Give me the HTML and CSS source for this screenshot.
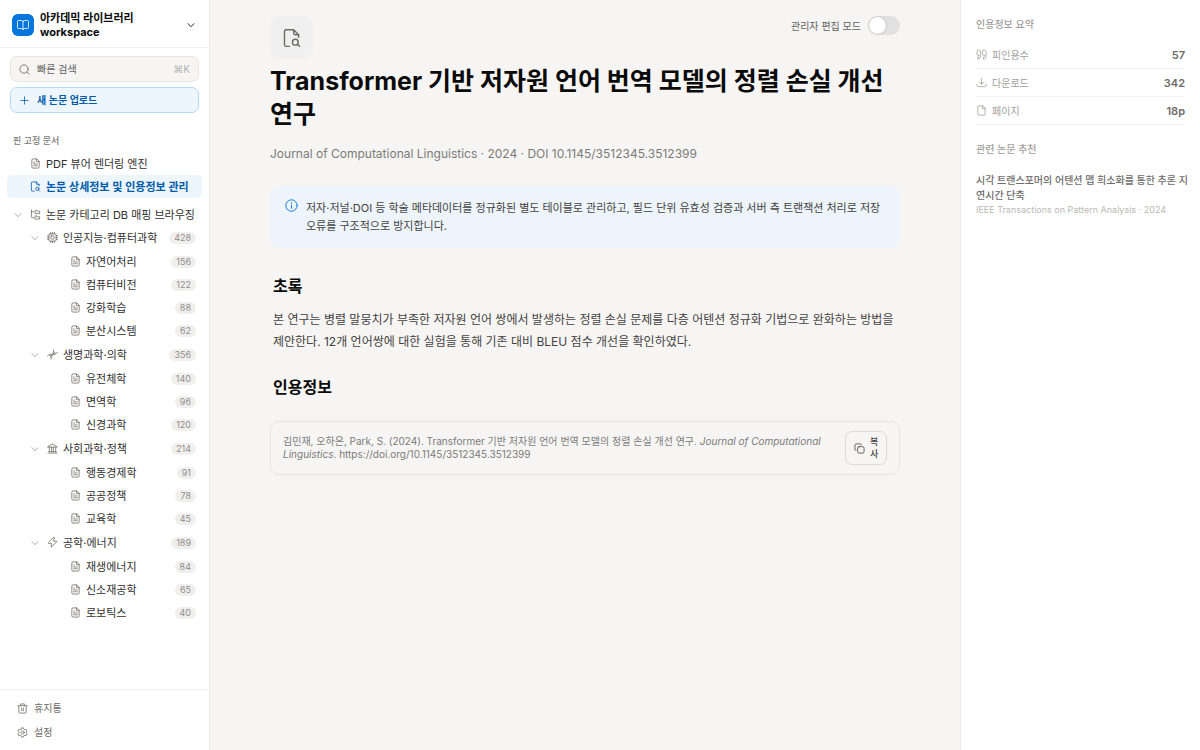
FILE: index.html
```html
<!DOCTYPE html>
<html lang="ko">
<head>
  <meta charset="UTF-8">
  <meta name="viewport" content="width=device-width, initial-scale=1.0">
  <title>아카데믹 라이브러리</title>
  <link rel="stylesheet" href="styles.css">
</head>
<body>
  <svg class="sprite" aria-hidden="true">
    <symbol id="i-book" viewBox="0 0 24 24"><path d="M12 5v16M12 5a3 3 0 0 0-3-2H3a2 2 0 0 0-2 2v12a2 2 0 0 0 2 2h6a3 3 0 0 1 3 2M12 5a3 3 0 0 1 3-2h6a2 2 0 0 1 2 2v12a2 2 0 0 1-2 2h-6a3 3 0 0 0-3 2"/></symbol>
    <symbol id="i-down" viewBox="0 0 24 24"><path d="M3 8l9 9 9-9"/></symbol>
    <symbol id="i-search" viewBox="0 0 24 24"><circle cx="11" cy="11" r="9"/><path d="M17.500 17.500L22 22"/></symbol>
    <symbol id="i-plus" viewBox="0 0 24 24"><path d="M12 4v16M4 12h16"/></symbol>
    <symbol id="i-doc" viewBox="0 0 24 24"><path d="M14 2H6.500A2.500 2.500 0 0 0 4 4.500v15A2.500 2.500 0 0 0 6.500 22h11a2.500 2.500 0 0 0 2.500-2.500V8zM14 2v6h6M8 9h2M8 13h8M8 17h8"/></symbol>
    <symbol id="i-docsearch" viewBox="0 0 24 24"><path d="M9 22H5a2 2 0 0 1-2-2V4a2 2 0 0 1 2-2h9l6 6v3M14 2v4a2 2 0 0 0 2 2h4"/><circle cx="16" cy="17" r="3.500"/><path d="M18.500 19.500L21 22"/></symbol>
    <symbol id="i-tree" viewBox="0 0 24 24"><path d="M3 2v15a2 2 0 0 0 2 2h4M3 6h5M12 3h3l1 2h5v5h-9zM12 15h3l1 2h5v5h-9z"/></symbol>
    <symbol id="i-cpu" viewBox="0 0 24 24"><rect x="4" y="4" width="16" height="16" rx="3"/><rect x="8.500" y="8.500" width="7" height="7" rx="1"/><path d="M8 1v3M12 1v3M16 1v3M8 20v3M12 20v3M16 20v3M1 8h3M1 12h3M1 16h3M20 8h3M20 12h3M20 16h3"/></symbol>
    <symbol id="i-dna" viewBox="0 0 24 24"><path d="M1 15c3-4 7-2 11-3s8 0 11-5M9 22c-2-4 1-7 3-10s4-5 2-10M5 13l5 5M14 6l5 4M9 11l2 4M13 9l2 3"/></symbol>
    <symbol id="i-bank" viewBox="0 0 24 24"><path d="M2 8l10-6 10 6v1H2zM5 9v10M10 9v10M14 9v10M19 9v10M2 22h20M4 19h16"/></symbol>
    <symbol id="i-bolt" viewBox="0 0 24 24"><path d="M13 2L3 12a1 1 0 0 0 1 2h6l-1 8 12-11a1 1 0 0 0-1-2h-6l2-7z"/></symbol>
    <symbol id="i-trash" viewBox="0 0 24 24"><path d="M2 6h20M8 6V2h8v4M4 6v14a2 2 0 0 0 2 2h12a2 2 0 0 0 2-2V6M10 11v6M14 11v6"/></symbol>
    <symbol id="i-gear" viewBox="0 0 24 24"><path d="M10 2h4l1 3 2 1 3-1 2 4-2 2v2l2 2-2 4-3-1-2 1-1 3h-4l-1-3-2-1-3 1-2-4 2-2v-2L2 9l2-4 3 1 2-1z"/><circle cx="12" cy="12" r="3.500"/></symbol>
    <symbol id="i-info" viewBox="0 0 24 24"><circle cx="12" cy="12" r="10.500"/><path d="M12 11v6M12 7v1"/></symbol>
    <symbol id="i-copy" viewBox="0 0 24 24"><rect x="8" y="8" width="14" height="14" rx="3"/><path d="M4 16a2 2 0 0 1-2-2V5a3 3 0 0 1 3-3h9a2 2 0 0 1 2 2"/></symbol>
    <symbol id="i-quote" viewBox="0 0 24 24"><path d="M6 14a3.500 3.500 0 0 1-4-3.500V6a4 4 0 0 1 8 0v9c0 4-2 7-6 7v-4c2 0 2-2 2-4zM18 14a3.500 3.500 0 0 1-4-3.500V6a4 4 0 0 1 8 0v9c0 4-2 7-6 7v-4c2 0 2-2 2-4z"/></symbol>
    <symbol id="i-download" viewBox="0 0 24 24"><path d="M12 3v13M7 11l5 5 5-5M2 16v2a3 3 0 0 0 3 3h14a3 3 0 0 0 3-3v-2"/></symbol>
    <symbol id="i-page" viewBox="0 0 24 24"><path d="M14 2H6a2 2 0 0 0-2 2v16a2 2 0 0 0 2 2h12a2 2 0 0 0 2-2V8zM14 2v6h6"/></symbol>
  </svg>

  <div class="app">
    <aside class="sidebar">
      <button class="workspace">
        <span class="logo"><svg class="icon"><use href="#i-book"/></svg></span>
        <span class="workspace-name">아카데믹 라이브러리 workspace</span>
        <svg class="icon arrow"><use href="#i-down"/></svg>
      </button>

      <div class="actions">
        <button class="action search"><svg class="icon"><use href="#i-search"/></svg><span>빠른 검색</span><kbd>⌘K</kbd></button>
        <button class="action upload"><svg class="icon"><use href="#i-plus"/></svg><span>새 논문 업로드</span></button>
      </div>

      <nav class="tree">
        <h2 class="tree-label">핀 고정 문서</h2>
        <a class="row pin" href="#"><svg class="icon"><use href="#i-doc"/></svg><span>PDF 뷰어 렌더링 엔진</span></a>
        <a class="row pin active" href="#"><svg class="icon"><use href="#i-docsearch"/></svg><span>논문 상세정보 및 인용정보 관리</span></a>

        <button class="row root"><svg class="icon chevron"><use href="#i-down"/></svg><svg class="icon"><use href="#i-tree"/></svg><span>논문 카테고리 DB 매핑 브라우징</span></button>
        <div class="group">
          <button class="row branch"><svg class="icon chevron"><use href="#i-down"/></svg><svg class="icon"><use href="#i-cpu"/></svg><span>인공지능·컴퓨터과학</span><b class="count">428</b></button>
          <a class="row leaf" href="#"><svg class="icon"><use href="#i-doc"/></svg><span>자연어처리</span><b class="count">156</b></a>
          <a class="row leaf" href="#"><svg class="icon"><use href="#i-doc"/></svg><span>컴퓨터비전</span><b class="count">122</b></a>
          <a class="row leaf" href="#"><svg class="icon"><use href="#i-doc"/></svg><span>강화학습</span><b class="count">88</b></a>
          <a class="row leaf" href="#"><svg class="icon"><use href="#i-doc"/></svg><span>분산시스템</span><b class="count">62</b></a>
        </div>
        <div class="group">
          <button class="row branch"><svg class="icon chevron"><use href="#i-down"/></svg><svg class="icon"><use href="#i-dna"/></svg><span>생명과학·의학</span><b class="count">356</b></button>
          <a class="row leaf" href="#"><svg class="icon"><use href="#i-doc"/></svg><span>유전체학</span><b class="count">140</b></a>
          <a class="row leaf" href="#"><svg class="icon"><use href="#i-doc"/></svg><span>면역학</span><b class="count">96</b></a>
          <a class="row leaf" href="#"><svg class="icon"><use href="#i-doc"/></svg><span>신경과학</span><b class="count">120</b></a>
        </div>
        <div class="group">
          <button class="row branch"><svg class="icon chevron"><use href="#i-down"/></svg><svg class="icon"><use href="#i-bank"/></svg><span>사회과학·정책</span><b class="count">214</b></button>
          <a class="row leaf" href="#"><svg class="icon"><use href="#i-doc"/></svg><span>행동경제학</span><b class="count">91</b></a>
          <a class="row leaf" href="#"><svg class="icon"><use href="#i-doc"/></svg><span>공공정책</span><b class="count">78</b></a>
          <a class="row leaf" href="#"><svg class="icon"><use href="#i-doc"/></svg><span>교육학</span><b class="count">45</b></a>
        </div>
        <div class="group">
          <button class="row branch"><svg class="icon chevron"><use href="#i-down"/></svg><svg class="icon"><use href="#i-bolt"/></svg><span>공학·에너지</span><b class="count">189</b></button>
          <a class="row leaf" href="#"><svg class="icon"><use href="#i-doc"/></svg><span>재생에너지</span><b class="count">84</b></a>
          <a class="row leaf" href="#"><svg class="icon"><use href="#i-doc"/></svg><span>신소재공학</span><b class="count">65</b></a>
          <a class="row leaf" href="#"><svg class="icon"><use href="#i-doc"/></svg><span>로보틱스</span><b class="count">40</b></a>
        </div>
      </nav>

      <div class="sidebar-footer">
        <a href="#"><svg class="icon"><use href="#i-trash"/></svg><span>휴지통</span></a>
        <a href="#"><svg class="icon"><use href="#i-gear"/></svg><span>설정</span></a>
      </div>
    </aside>

    <main class="paper">
      <div class="paper-top">
        <div class="paper-icon"><svg class="icon"><use href="#i-docsearch"/></svg></div>
        <label class="edit-mode">관리자 편집 모드 <input type="checkbox" class="switch"></label>
      </div>
      <h1>Transformer 기반 저자원 언어 번역 모델의 정렬 손실 개선 연구</h1>
      <p class="meta">Journal of Computational Linguistics · 2024 · DOI 10.1145/3512345.3512399</p>

      <div class="callout">
        <svg class="icon"><use href="#i-info"/></svg>
        <p>저자·저널·DOI 등 학술 메타데이터를 정규화된 별도 테이블로 관리하고, 필드 단위 유효성 검증과 서버 측 트랜잭션 처리로 저장 오류를 구조적으로 방지합니다.</p>
      </div>

      <section class="block">
        <h2>초록</h2>
        <p>본 연구는 병렬 말뭉치가 부족한 저자원 언어 쌍에서 발생하는 정렬 손실 문제를 다층 어텐션 정규화 기법으로 완화하는 방법을 제안한다. 12개 언어쌍에 대한 실험을 통해 기존 대비 BLEU 점수 개선을 확인하였다.</p>
      </section>
      <section class="block">
        <h2>인용정보</h2>
      </section>
      <div class="citation">
        <p>김민재, 오하은, Park, S. (2024). Transformer 기반 저자원 언어 번역 모델의 정렬 손실 개선 연구. <em>Journal of Computational Linguistics</em>. https://doi.org/10.1145/3512345.3512399</p>
        <button class="copy"><svg class="icon"><use href="#i-copy"/></svg><span>복사</span></button>
      </div>
    </main>

    <aside class="summary">
      <h2>인용정보 요약</h2>
      <dl class="stats">
        <div><dt><svg class="icon"><use href="#i-quote"/></svg>피인용수</dt><dd>57</dd></div>
        <div><dt><svg class="icon"><use href="#i-download"/></svg>다운로드</dt><dd>342</dd></div>
        <div><dt><svg class="icon"><use href="#i-page"/></svg>페이지</dt><dd>18p</dd></div>
      </dl>
      <h2>관련 논문 추천</h2>
      <a class="related" href="#">
        <strong>시각 트랜스포머의 어텐션 맵 희소화를 통한 추론 지연시간 단축</strong>
        <small>IEEE Transactions on Pattern Analysis · 2024</small>
      </a>
    </aside>
  </div>
</body>
</html>
```
FILE: styles.css
```css
* {
  box-sizing: border-box;
}

body {
  margin: 0;
  font-family: Inter, "Noto Sans CJK KR", sans-serif;
  font-size: 11px;
  line-height: 16px;
  color: #444240;
  background: #f6f5f4;
}

h1, h2, p, dl, dd {
  margin: 0;
}

a {
  color: inherit;
  text-decoration: none;
}

button {
  font: inherit;
  color: inherit;
  background: none;
  border: none;
  padding: 0;
  text-align: left;
  cursor: pointer;
}

.sprite {
  display: none;
}

.icon {
  width: 11px;
  height: 11px;
  flex: none;
  fill: none;
  stroke: currentColor;
  stroke-width: 1.7;
  stroke-linecap: round;
  stroke-linejoin: round;
}

.app {
  display: flex;
  min-height: 100vh;
}

/* sidebar */
.sidebar {
  width: 210px;
  flex: none;
  display: flex;
  flex-direction: column;
  background: #fff;
  border-right: 1px solid #e9e9e9;
}

.workspace {
  display: flex;
  align-items: center;
  gap: 6px;
  padding: 11px 14px 8px 12px;
  font-size: 11px;
  font-weight: 700;
  line-height: 14px;
  color: #0b0b0b;
  border-bottom: 1px solid #f1f1f1;
}

.workspace-name {
  flex: 1;
  padding-right: 40px;
}

.workspace .arrow {
  width: 8px;
  height: 8px;
  stroke-width: 3;
  color: #222;
}

.logo {
  display: grid;
  place-items: center;
  width: 22px;
  height: 22px;
  border-radius: 6px;
  background: #0075de;
  color: #fff;
}

.logo .icon {
  width: 12px;
  height: 12px;
}

.actions {
  display: flex;
  flex-direction: column;
  gap: 5px;
  padding: 8px 10px;
}

.action {
  display: flex;
  align-items: center;
  gap: 7px;
  height: 26px;
  padding: 0 8px;
  font-size: 10px;
  border: 1px solid #e6e5e4;
  border-radius: 7px;
  background: #f6f5f4;
  color: #61605e;
}

.action kbd {
  margin-left: auto;
  font: inherit;
  color: #b5b3b0;
}

.action.upload {
  font-weight: 600;
  color: #005bab;
  background: #edf5fd;
  border-color: #b7d9f8;
}

.tree {
  flex: 1;
  display: flex;
  flex-direction: column;
  padding: 12px 7px;
}

.tree-label {
  padding: 0 6px 3px;
  font-size: 9px;
  font-weight: 500;
  color: #7c7a77;
}

.row {
  display: flex;
  align-items: center;
  gap: 5px;
  width: 100%;
  height: 23px;
  padding: 0 6px;
  font-size: 11px;
  border-radius: 5px;
  color: #31302e;
  white-space: nowrap;
}

.row .icon {
  color: #6d6b68;
}

.row .chevron {
  width: 8px;
  height: 8px;
  margin-right: 3px;
}

.pin {
  padding-left: 23px;
}

.row.active, .row.active .icon {
  color: #005bab;
}

.row.active {
  font-weight: 600;
  background: #edf5fd;
}

.root {
  margin-top: 5px;
  padding-left: 7px;
}

.branch {
  margin-bottom: 1px;
  padding-left: 24px;
}

.leaf {
  padding-left: 63px;
}

.group + .group {
  margin-top: 1px;
}

.count {
  margin-left: auto;
  padding: 0 5px;
  font-size: 9px;
  font-weight: 400;
  line-height: 12px;
  color: #908e8b;
  background: #f0efee;
  border-radius: 6px;
}

.sidebar-footer {
  display: flex;
  flex-direction: column;
  gap: 8px;
  padding: 10px 17px;
  font-size: 10px;
  color: #6d6b68;
  border-top: 1px solid #efefef;
}

.sidebar-footer a {
  display: flex;
  align-items: center;
  gap: 6px;
}

/* paper */
.paper {
  flex: 1;
  min-width: 0;
  padding: 16px 60px;
}

.paper-top {
  display: flex;
  justify-content: space-between;
  align-items: flex-start;
}

.paper-icon {
  display: grid;
  place-items: center;
  width: 43px;
  height: 43px;
  border-radius: 9px;
  background: #f0f0f0;
  color: #6d6b68;
}

.paper-icon .icon {
  width: 20px;
  height: 20px;
  stroke-width: 1.7;
}

.edit-mode {
  display: flex;
  align-items: center;
  gap: 7px;
  font-size: 10px;
  color: #61605e;
}

.switch {
  appearance: none;
  width: 32px;
  height: 19px;
  margin: 0;
  padding: 1px;
  border-radius: 10px;
  background: #e2e1e1;
  cursor: pointer;
}

.switch::before {
  content: "";
  display: block;
  width: 17px;
  height: 17px;
  border-radius: 50%;
  background: #fff;
  box-shadow: 0 0 2px rgba(0, 0, 0, 0.3);
}

.switch:checked {
  background: #0075de;
}

.switch:checked::before {
  margin-left: auto;
}

h1 {
  margin-top: 6px;
  font-size: 25px;
  font-weight: 700;
  line-height: 33px;
  color: #0b0b0b;
}

.meta {
  margin-top: 15px;
  font-size: 12px;
  color: #7c7a77;
}

.callout {
  display: flex;
  gap: 8px;
  margin-top: 24px;
  padding: 13px 15px;
  border-radius: 10px;
  background: #edf4fc;
}

.callout .icon {
  width: 13px;
  height: 13px;
  color: #0075de;
}

.callout p {
  font-size: 11px;
  line-height: 18px;
}

.block {
  margin-top: 27px;
  padding: 0 3px;
}

.block + .block {
  margin-top: 23px;
}

.block h2 {
  font-size: 16px;
  line-height: 22px;
  color: #0b0b0b;
}

.block p {
  margin-top: 12px;
  font-size: 12px;
  line-height: 22px;
}

.citation {
  display: flex;
  align-items: center;
  gap: 20px;
  margin-top: 23px;
  padding: 9px 12px;
  border: 1px solid #e6e5e4;
  border-radius: 9px;
}

.citation p {
  flex: 1;
  font-size: 10px;
  line-height: 13px;
  color: #7c7a77;
}

.copy {
  display: flex;
  align-items: center;
  gap: 5px;
  width: 42px;
  padding: 4px 8px;
  font-size: 9px;
  font-weight: 500;
  line-height: 12px;
  border: 1px solid #dcdbda;
  border-radius: 7px;
}

/* right panel */
.summary {
  width: 240px;
  flex: none;
  padding: 16px 15px;
  background: #fff;
  border-left: 1px solid #e9e9e9;
  color: #a09e9b;
}

.summary h2 {
  font-size: 10px;
  font-weight: 500;
}

.stats {
  margin: 9px 0 16px;
}

.stats div {
  display: flex;
  justify-content: space-between;
  align-items: center;
  height: 28px;
  border-bottom: 1px solid #f3f3f3;
}

.stats dt {
  display: flex;
  align-items: center;
  gap: 5px;
  font-size: 10px;
}

.stats dd {
  font-size: 11px;
  font-weight: 600;
  color: #6d6b68;
}

.related {
  display: block;
  margin: 16px -4px 0 0;
}

.related strong {
  display: block;
  font-size: 10px;
  font-weight: 500;
  line-height: 15px;
  color: #6d6b68;
}

.related small {
  display: block;
  font-size: 9px;
  line-height: 14px;
  color: #bab8b5;
}
```
